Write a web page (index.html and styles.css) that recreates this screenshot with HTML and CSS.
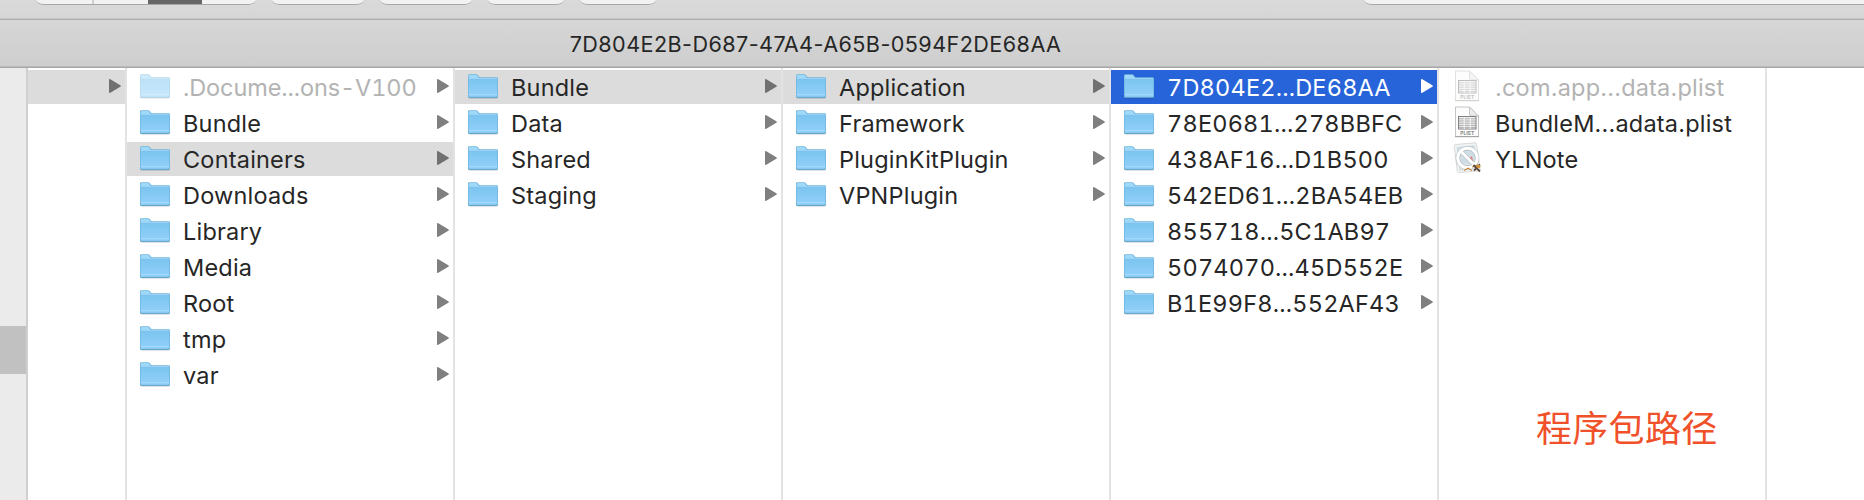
FILE: index.html
```html
<!DOCTYPE html>
<html lang="zh">
<head>
<meta charset="utf-8">
<title>7D804E2B-D687-47A4-A65B-0594F2DE68AA</title>
<link rel="stylesheet" href="styles.css">
</head>
<body>
<svg class="defs" aria-hidden="true">
  <defs>
    <linearGradient id="front" x1="0" y1="0" x2="0" y2="1">
      <stop offset="0" stop-color="#7cc5f1"/><stop offset="1" stop-color="#92d1fa"/>
    </linearGradient>
    <symbol id="folder" viewBox="0 0 30 34">
      <rect x=".5" y="26.5" width="29" height="2.2" rx="1" fill="#000" opacity=".16"/>
      <path d="M0 5.500Q0 4.200 1.300 4.200H8.300Q9.300 4.200 9.900 5.200L10.800 6.600Q11.200 7.200 12.200 7.200H28.700Q30 7.200 30 8.500V26.500Q30 27.800 28.700 27.800H1.300Q0 27.800 0 26.500Z" fill="#6eb4dc"/>
      <path d="M.7 5.900Q.7 5 1.600 5H8Q8.700 5 9.200 5.700L10.200 7.300Q10.600 8 11.600 8H28.400Q29.300 8 29.300 8.800V10H.7Z" fill="#a0d8f9"/>
      <path d="M.7 9.700H29.300V26Q29.300 27 28.400 27H1.600Q.7 27 .7 26Z" fill="url(#front)"/>
      <path d="M.7 9.300H29.300" stroke="#71b9e5" stroke-width=".8"/>
      <path d="M1 24.500H29" stroke="#a9dcfb" stroke-width=".8"/>
      <path d="M.6 27.300H29.400" stroke="#62a5cc" stroke-width="1"/>
    </symbol>
    <symbol id="arrow" viewBox="0 0 12 14">
      <path d="M0 1Q0-.3 1.300.3L11.300 6.200Q12.500 7 11.300 7.800L1.300 13.700Q0 14.300 0 13Z" fill="currentColor"/>
    </symbol>
    <symbol id="plist" viewBox="0 0 30 34">
      <path d="M3.500 1H17.500L26.500 10V30.500H3.500Z" fill="#fcfcfc" stroke="#c4c4c4" stroke-width="1"/>
      <path d="M3 30.700H27" stroke="#999" stroke-width=".9"/>
      <path d="M17.500 1V8Q17.500 10 19.500 10H26.500Z" fill="#ececec" stroke="#bdbdbd" stroke-width=".8"/>
      <rect x="6.500" y="10.500" width="17.500" height="12.500" fill="#efefef" stroke="#808080" stroke-width="1"/>
      <path d="M7 12.800H24M7 15H24M7 17.200H24M7 19.400H24M7 21.400H24" stroke="#9b9b9b" stroke-width=".8"/>
      <path d="M12.200 11V23M18.200 11V23" stroke="#f3f3f3" stroke-width="1"/>
      <text x="15.200" y="28.900" text-anchor="middle" class="plist-tag">PLIST</text>
    </symbol>
    <symbol id="app" viewBox="0 0 30 34">
      <path d="M2.200 4Q2 2.800 3.200 2.600L23 .8Q24.200.6 24.500 1.800L28 27Q28.200 28.600 26.600 28.800L7 30.700Q5.600 30.800 5.400 29.500Z" fill="#f3f4f4" stroke="#cfcfcf" stroke-width=".8"/>
      <path d="M4.500 5L22.500 3L26 26.700L7.500 28.500Z" fill="#cfdde5"/>
      <path d="M7 22L25 20L26 26.700L7.500 28.500Z" fill="#dce1e3"/>
      <path d="M18 15.500L20 14L21 19L18 21Z" fill="#df8880"/>
      <circle cx="15.500" cy="16" r="9.700" fill="none" stroke="#9da9af" stroke-width="4.200" opacity=".65"/>
      <path d="M8.800 9.200L22.200 22.800" stroke="#9da9af" stroke-width="4.200" opacity=".5"/>
      <circle cx="15.500" cy="16" r="9.700" fill="none" stroke="#fff" stroke-width="3"/>
      <path d="M8.800 9.200L22.200 22.800" stroke="#fff" stroke-width="3"/>
      <path d="M12 28.500L16 26.200L20 28.500M20 25L26.500 22.800" stroke="#c38a43" stroke-width="1.300" fill="none"/>
      <path d="M21.500 23L28 29.500M28 22.500L22 28.700" stroke="#5c4638" stroke-width="1.800"/>
      <path d="M24 23.500L28.200 23V26L25 26Z" fill="#d6943c"/>
    </symbol>
  </defs>
</svg>

<div class="window">
  <header class="toolbar">
    <div class="button views"><span class="seg"></span><span class="seg divided"></span><span class="seg active"></span><span class="seg"></span></div>
    <div class="button wide"></div>
    <div class="button wide"></div>
    <div class="button"></div>
    <div class="button"></div>
    <div class="search"></div>
  </header>
  <div class="titlebar"><span class="title">7D804E2B-D687-47A4-A65B-0594F2DE68AA</span></div>

  <main class="browser">
    <aside class="sidebar"><div class="sidebar-selected"></div></aside>
    <ul class="column narrow">
      <li class="row open"><svg class="arrow"><use href="#arrow"/></svg></li>
    </ul>
    <ul class="column">
      <li class="row hidden"><svg class="icon"><use href="#folder"/></svg><span class="name docs">.Docume...ons-V100</span><svg class="arrow"><use href="#arrow"/></svg></li>
      <li class="row"><svg class="icon"><use href="#folder"/></svg><span class="name">Bundle</span><svg class="arrow"><use href="#arrow"/></svg></li>
      <li class="row open"><svg class="icon"><use href="#folder"/></svg><span class="name">Containers</span><svg class="arrow"><use href="#arrow"/></svg></li>
      <li class="row"><svg class="icon"><use href="#folder"/></svg><span class="name">Downloads</span><svg class="arrow"><use href="#arrow"/></svg></li>
      <li class="row"><svg class="icon"><use href="#folder"/></svg><span class="name">Library</span><svg class="arrow"><use href="#arrow"/></svg></li>
      <li class="row"><svg class="icon"><use href="#folder"/></svg><span class="name">Media</span><svg class="arrow"><use href="#arrow"/></svg></li>
      <li class="row"><svg class="icon"><use href="#folder"/></svg><span class="name">Root</span><svg class="arrow"><use href="#arrow"/></svg></li>
      <li class="row"><svg class="icon"><use href="#folder"/></svg><span class="name">tmp</span><svg class="arrow"><use href="#arrow"/></svg></li>
      <li class="row"><svg class="icon"><use href="#folder"/></svg><span class="name">var</span><svg class="arrow"><use href="#arrow"/></svg></li>
    </ul>
    <ul class="column">
      <li class="row open"><svg class="icon"><use href="#folder"/></svg><span class="name">Bundle</span><svg class="arrow"><use href="#arrow"/></svg></li>
      <li class="row"><svg class="icon"><use href="#folder"/></svg><span class="name">Data</span><svg class="arrow"><use href="#arrow"/></svg></li>
      <li class="row"><svg class="icon"><use href="#folder"/></svg><span class="name">Shared</span><svg class="arrow"><use href="#arrow"/></svg></li>
      <li class="row"><svg class="icon"><use href="#folder"/></svg><span class="name">Staging</span><svg class="arrow"><use href="#arrow"/></svg></li>
    </ul>
    <ul class="column">
      <li class="row open"><svg class="icon"><use href="#folder"/></svg><span class="name">Application</span><svg class="arrow"><use href="#arrow"/></svg></li>
      <li class="row"><svg class="icon"><use href="#folder"/></svg><span class="name">Framework</span><svg class="arrow"><use href="#arrow"/></svg></li>
      <li class="row"><svg class="icon"><use href="#folder"/></svg><span class="name">PluginKitPlugin</span><svg class="arrow"><use href="#arrow"/></svg></li>
      <li class="row"><svg class="icon"><use href="#folder"/></svg><span class="name">VPNPlugin</span><svg class="arrow"><use href="#arrow"/></svg></li>
    </ul>
    <ul class="column ids">
      <li class="row selected"><svg class="icon"><use href="#folder"/></svg><span class="name">7D804E2...DE68AA</span><svg class="arrow"><use href="#arrow"/></svg></li>
      <li class="row"><svg class="icon"><use href="#folder"/></svg><span class="name">78E0681...278BBFC</span><svg class="arrow"><use href="#arrow"/></svg></li>
      <li class="row"><svg class="icon"><use href="#folder"/></svg><span class="name">438AF16...D1B500</span><svg class="arrow"><use href="#arrow"/></svg></li>
      <li class="row"><svg class="icon"><use href="#folder"/></svg><span class="name">542ED61...2BA54EB</span><svg class="arrow"><use href="#arrow"/></svg></li>
      <li class="row"><svg class="icon"><use href="#folder"/></svg><span class="name">855718...5C1AB97</span><svg class="arrow"><use href="#arrow"/></svg></li>
      <li class="row"><svg class="icon"><use href="#folder"/></svg><span class="name">5074070...45D552E</span><svg class="arrow"><use href="#arrow"/></svg></li>
      <li class="row"><svg class="icon"><use href="#folder"/></svg><span class="name">B1E99F8...552AF43</span><svg class="arrow"><use href="#arrow"/></svg></li>
    </ul>
    <ul class="column files">
      <li class="row hidden"><svg class="icon"><use href="#plist"/></svg><span class="name">.com.app...data.plist</span></li>
      <li class="row"><svg class="icon"><use href="#plist"/></svg><span class="name">BundleM...adata.plist</span></li>
      <li class="row"><svg class="icon"><use href="#app"/></svg><span class="name">YLNote</span></li>
    </ul>
  </main>
  <div class="annotation">程序包路径</div>
</div>
</body>
</html>
```

FILE: styles.css
```css
* { box-sizing: border-box; }

body {
  margin: 0;
  background: #fff;
  color: #262626;
  font-family: Inter, Roboto, sans-serif;
}

.defs { position: absolute; width: 0; height: 0; }

.window {
  position: relative;
  display: flex;
  flex-direction: column;
  width: 1864px;
  height: 500px;
  overflow: hidden;
}

.toolbar {
  display: flex;
  flex: none;
  align-items: flex-start;
  gap: 16px;
  height: 20px;
  padding-left: 36px;
  background: linear-gradient(#dadada, #d6d6d6);
  border-bottom: 1px solid #adadad;
  box-shadow: inset 0 -1px #c6c6c6;
}

.button, .search {
  flex: none;
  width: 76px;
  height: 5px;
  background: #f2f2f2;
  border-bottom: 1px solid #a6a6a6;
  border-radius: 0 0 8px 8px / 0 0 5px 5px;
}
.button.wide { width: 92px; }
.button.views { display: flex; width: 220px; overflow: hidden; }
.seg { flex: none; width: 56px; height: 5px; }
.seg.divided { border-left: 2px solid #d0d0d0; }
.seg.active { width: 54px; background: #666; }
.search { width: 560px; margin-left: 692px; }

.titlebar {
  display: flex;
  flex: none;
  justify-content: center;
  height: 48px;
  padding-right: 233px;
  background: linear-gradient(#d6d6d6, #cecece);
  border-bottom: 1px solid #a6a6a6;
  box-shadow: inset 0 -1px #bababa;
}
.title {
  font-size: 21.6px;
  line-height: 49px;
  letter-spacing: 0.43px;
  white-space: nowrap;
}

.browser { display: flex; flex: 1; min-height: 0; }

.sidebar {
  flex: none;
  width: 28px;
  padding-top: 258px;
  background: #ebebeb;
  border-right: 2px solid #cfcfcf;
}
.sidebar-selected { height: 48px; background: #c1c1c1; }

.column {
  display: flex;
  flex: none;
  flex-direction: column;
  gap: 2px;
  width: 328px;
  margin: 0;
  padding: 2px 0 0;
  border-right: 2px solid #e3e3e3;
  list-style: none;
}
.column.narrow { width: 99px; }

.row {
  display: flex;
  flex: none;
  align-items: center;
  height: 34px;
  padding: 0 4px 0 13px;
}
.row.open { background: #dcdcdc; }
.row.open .arrow { color: #707070; }
.row.selected { background: #2864d9; color: #fff; }
.row.selected .arrow { color: #fff; }
.row.hidden .icon { opacity: .5; }
.row.hidden .name { color: #b3b3b3; }

.icon { flex: none; width: 30px; height: 34px; margin-right: 13px; }
.arrow {
  flex: none;
  width: 12px;
  height: 14px;
  margin: 0 0 2px auto;
  color: #808080;
}
.name {
  padding-top: 2px;
  font-size: 23.5px;
  line-height: 34px;
  letter-spacing: 0.2px;
  white-space: nowrap;
}
.ids .name, .docs { font-variant-numeric: tabular-nums; }
.name.docs { letter-spacing: -0.1px; }
.plist-tag { font: 700 5px Inter, sans-serif; fill: #888; }

.annotation {
  position: absolute;
  left: 1536px;
  top: 400px;
  color: #f0512a;
  font-family: "Noto Sans CJK SC", sans-serif;
  font-size: 36px;
  letter-spacing: 0.3px;
  line-height: 52px;
  white-space: nowrap;
}
```
